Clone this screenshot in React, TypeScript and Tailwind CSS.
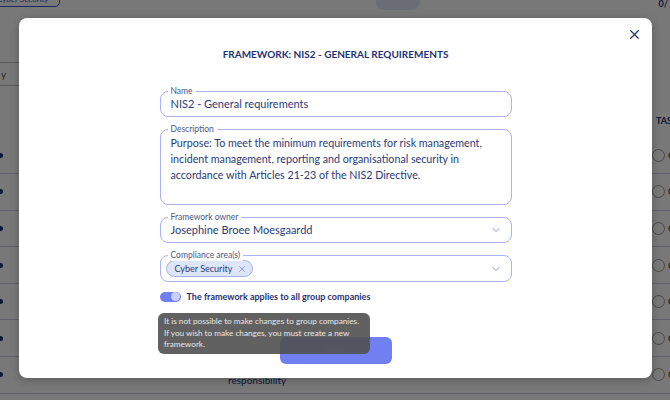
import { X, ChevronDown } from 'lucide-react';

const rows = [0, 1, 2, 3, 4, 5, 6];

function Field({
  label,
  children,
  className = '',
}: {
  label: string;
  children: React.ReactNode;
  className?: string;
}) {
  return (
    <div
      className={`relative rounded-[8px] border border-[#a9b3f6] ${className}`}
    >
      <span className="absolute -top-[7px] left-[7px] bg-white px-[3px] text-[8.5px] leading-[12px] text-[#4b5783]">
        {label}
      </span>
      {children}
    </div>
  );
}

export default function App() {
  return (
    <div
      className="relative w-[670px] h-[400px] overflow-hidden bg-white"
      style={{ fontFamily: 'Lato, "Open Sans", sans-serif' }}
    >
      {/* page underneath */}
      <div className="absolute inset-0 flex flex-col">
        <div className="flex h-[10px] items-start">
          <div className="-ml-[8px] -mt-[8px] h-[15px] w-[68px] rounded-[5px] border border-[#3b57c4] text-[8px] leading-[12px] text-[#3b57c4] px-[4px]">
            Cyber Security
          </div>
          <div className="ml-[316px] h-[10px] w-[44px] rounded-b-[8px] bg-[#e3e8fb]" />
          <div className="ml-auto mr-[2px] text-[9px] font-bold leading-[8px] text-[#1f3275]">
            0/
          </div>
        </div>
        <div className="mt-[52px] -ml-[20px] h-[24px] w-[60px] border border-[#bbb] text-[10px] leading-[22px] text-[#555] pl-[20px]">
          y
        </div>
        <div className="mt-[28px] flex justify-end">
          <span className="text-[9px] font-bold text-[#1f3275] -mr-[8px]">
            TASK
          </span>
        </div>
        <div className="mt-[10px] flex flex-col">
          {rows.map((r) => (
            <div
              key={r}
              className="flex h-[36.6px] items-center justify-between border-b border-[#c9cde6]"
            >
              <span className="-ml-[2px] h-[5px] w-[5px] rounded-full bg-[#1f3275]" />
              <span className="flex items-center gap-[3px] -mr-[6px]">
                <span className="h-[13px] w-[13px] rounded-full border border-[#999]" />
                <span className="text-[10px] text-[#333]">O</span>
              </span>
            </div>
          ))}
        </div>
        <div className="absolute left-[228px] top-[373px] text-[10px] text-[#1f3275]">
          responsibility
        </div>
      </div>

      {/* overlay */}
      <div className="absolute inset-0 bg-black/[0.53]" />

      {/* modal */}
      <div className="absolute left-[19px] top-[18px] h-[360px] w-[633px] rounded-[8px] bg-white shadow-[0_2px_8px_rgba(0,0,0,0.25)]">
        <button className="absolute right-[10px] top-[9px] text-[#1f3275]">
          <X size={15} strokeWidth={2} />
        </button>
        <h1 className="pt-[29px] text-center text-[10px] font-bold leading-[15px] text-[#1f3275]">
          FRAMEWORK: NIS2 - GENERAL REQUIREMENTS
        </h1>

        <div className="mx-auto mt-[29px] flex w-[352px] flex-col gap-[12px]">
          <Field label="Name" className="h-[26px]">
            <div className="px-[10px] text-[11px] leading-[24px] text-[#2b3b78]">
              NIS2 - General requirements
            </div>
          </Field>
          <Field label="Description" className="h-[76px]">
            <p className="px-[10px] pt-[5px] text-[10.7px] leading-[16px] text-[#2b3b78]">
              Purpose: To meet the minimum requirements for risk management,
              incident management, reporting and organisational security in
              accordance with Articles 21-23 of the NIS2 Directive.
            </p>
          </Field>
          <Field label="Framework owner" className="h-[26px]">
            <div className="flex items-center justify-between pl-[10px] pr-[9px] text-[11px] leading-[24px] text-[#2b3b78]">
              Josephine Broee Moesgaardd
              <ChevronDown size={12} strokeWidth={2} className="text-[#8894ee]" />
            </div>
          </Field>
          <Field label="Compliance area(s)" className="h-[27px]">
            <div className="flex h-full items-center justify-between pl-[5px] pr-[9px]">
              <span className="flex h-[17px] items-center gap-[5px] rounded-full border border-[#a3b1ea] bg-[#dde5f8] pl-[8px] pr-[5px] text-[9px] text-[#2b3b78]">
                Cyber Security
                <X size={10} strokeWidth={2} className="text-[#8190dc]" />
              </span>
              <ChevronDown size={12} strokeWidth={2} className="text-[#8894ee]" />
            </div>
          </Field>
        </div>

        <div className="mx-auto mt-[8px] flex w-[352px] items-center gap-[6px]">
          <span className="flex h-[10px] w-[21px] items-center justify-end rounded-full bg-[#7080f3] pr-[1px]">
            <span className="h-[9px] w-[9px] rounded-full bg-[#c9cefa]" />
          </span>
          <span className="text-[9px] font-bold text-[#1f3275]">
            The framework applies to all group companies
          </span>
        </div>

        <div className="mt-[33px] flex justify-center">
          <button className="h-[27px] w-[112px] rounded-[6px] bg-[#7080f3] text-[11px] text-white/30">
            Save
          </button>
        </div>

        {/* tooltip */}
        <div className="absolute left-[139px] top-[295px] w-[212px] whitespace-nowrap rounded-[6px] bg-[#505050]/90 px-[6px] py-[3px] text-[8.2px] leading-[11.5px] text-[#e6e6e6]">
          It is not possible to make changes to group companies.
          <br />
          If you wish to make changes, you must create a new
          <br />
          framework.
        </div>
      </div>
    </div>
  );
}
